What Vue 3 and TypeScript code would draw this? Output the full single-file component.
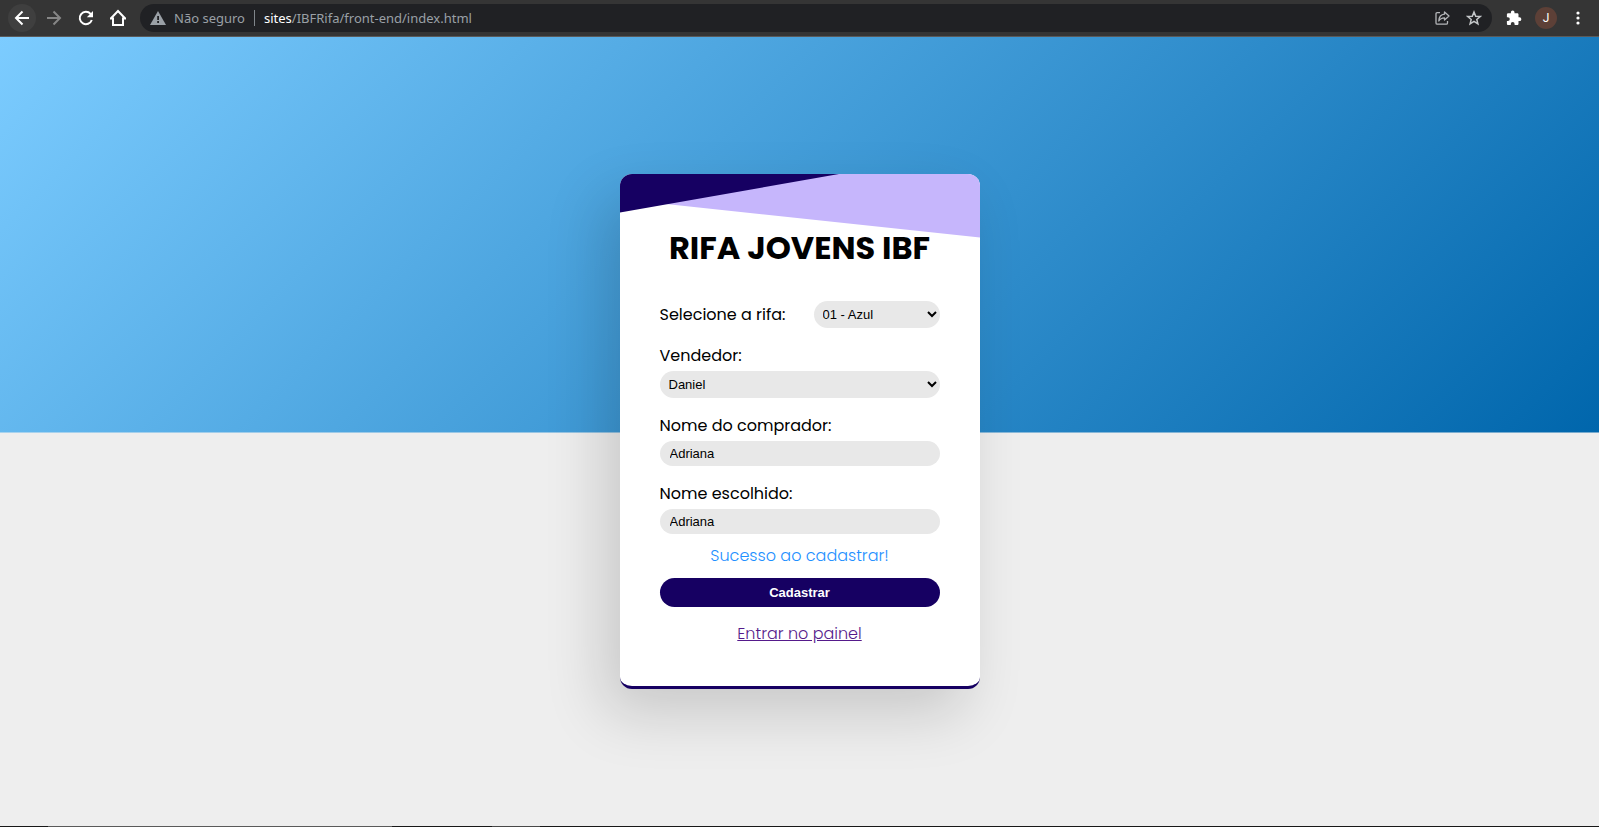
<script setup lang="ts">
import { ref } from 'vue'

const raffles: string[] = ['01 - Azul', '02 - Verde', '03 - Rosa']
const sellers: string[] = ['Daniel', 'Adriana', 'Lucas']

const raffle = ref<string>('01 - Azul')
const seller = ref<string>('Daniel')
const buyer = ref<string>('Adriana')
const chosen = ref<string>('Adriana')
const message = ref<string>('Sucesso ao cadastrar!')
</script>

<template>
  <div class="window">
    <header class="toolbar">
      <nav class="nav" aria-label="Navegação">
        <button type="button" class="icon-btn hovered" aria-label="Voltar">
          <svg width="16" height="16" viewBox="0 0 16 16" fill="none" stroke="#fff" stroke-width="2">
            <path d="M15 8H2.5M8.5 1.5L2 8l6.500 6.500" />
          </svg>
        </button>
        <button type="button" class="icon-btn" aria-label="Avançar">
          <svg width="16" height="16" viewBox="0 0 16 16" fill="none" stroke="#868686" stroke-width="2">
            <path d="M1 8h12.500M7.500 1.500L14 8l-6.500 6.500" />
          </svg>
        </button>
        <button type="button" class="icon-btn" aria-label="Recarregar">
          <svg width="16" height="16" viewBox="0 0 16 16" fill="none" stroke="#fff" stroke-width="2">
            <path d="M13.800 10A6.200 6.200 0 1 1 12.600 3.800L14 5.200" />
            <path d="M15 1v6.200H8.800z" fill="#fff" stroke="none" />
          </svg>
        </button>
        <button type="button" class="icon-btn" aria-label="Página inicial">
          <svg width="18" height="18" viewBox="0 0 18 18" fill="none" stroke="#fff" stroke-width="2">
            <path d="M1.800 9.500L9 2l7.200 7.500M4 8.500V16h10V8.500M1 9.500h3M14 9.500h3" />
          </svg>
        </button>
      </nav>

      <div class="address">
        <svg class="warn" width="16" height="14" viewBox="0 0 16 14">
          <path d="M8 0l8 14H0z" fill="#9aa0a6" />
          <path d="M7.200 5h1.800v4H7.200zM7.200 10h1.800v2H7.200z" fill="#202124" />
        </svg>
        <span class="security">Não seguro</span>
        <span class="divider"></span>
        <span class="url"><b>sites</b>/IBFRifa/front-end/index.html</span>
        <button type="button" class="mini-btn" aria-label="Compartilhar">
          <svg width="15" height="14" viewBox="0 0 15 14" fill="none" stroke="#b4b6b9" stroke-width="1.300">
            <path d="M5 1.700H2.200Q1 1.700 1 3v9q0 1.200 1.200 1.200h9q1.300 0 1.300-1.200v-2" />
            <path d="M9.500 1l4.500 4-4.500 4V6.800C6.800 6.800 5 7.800 3.800 10 4 6.500 6 3.500 9.500 3.200z" stroke-linejoin="round" />
          </svg>
        </button>
        <button type="button" class="mini-btn" aria-label="Favoritar">
          <svg width="16" height="16" viewBox="0 0 16 16" fill="none" stroke="#c4c7c9" stroke-width="1.500">
            <path d="M8 2l1.700 4.200 4.500.3-3.400 2.900 1.100 4.400L8 11.400l-3.900 2.400 1.100-4.400L1.800 6.500l4.500-.3z" />
          </svg>
        </button>
      </div>

      <div class="tools">
        <button type="button" class="mini-btn" aria-label="Extensões">
          <svg width="16" height="16" viewBox="0 0 16 16" fill="#fff">
            <path d="M13.500 7.300h-1V4.600c0-.8-.6-1.300-1.300-1.300H8.500V2.200a1.800 1.800 0 0 0-3.600 0v1.100H2.200C1.400 3.300.9 3.900.9 4.600v2.600h1a1.900 1.900 0 0 1 0 3.800h-1v2.700c0 .7.600 1.300 1.300 1.300h2.600v-1a1.900 1.900 0 0 1 3.800 0v1h2.600c.7 0 1.300-.6 1.300-1.300V11h1a1.800 1.800 0 0 0 0-3.700z" />
          </svg>
        </button>
        <button type="button" class="avatar" aria-label="Perfil">J</button>
        <button type="button" class="mini-btn" aria-label="Menu">
          <svg width="4" height="14" viewBox="0 0 4 14" fill="#fff">
            <circle cx="2" cy="2" r="1.600" />
            <circle cx="2" cy="7" r="1.600" />
            <circle cx="2" cy="12" r="1.600" />
          </svg>
        </button>
      </div>
    </header>

    <main class="page">
      <form class="card" @submit.prevent>
        <svg class="ribbon" viewBox="0 0 360 64" preserveAspectRatio="none" aria-hidden="true">
          <path d="M40 0H360V63.500L46 30z" fill="#c6b6fc" />
          <path d="M0 0H219L0 38.500z" fill="#160062" />
        </svg>

        <h1>RIFA JOVENS IBF</h1>

        <div class="field inline">
          <label for="raffle">Selecione a rifa:</label>
          <select id="raffle" v-model="raffle">
            <option v-for="r in raffles" :key="r">{{ r }}</option>
          </select>
        </div>
        <div class="field">
          <label for="seller">Vendedor:</label>
          <select id="seller" v-model="seller">
            <option v-for="s in sellers" :key="s">{{ s }}</option>
          </select>
        </div>
        <div class="field">
          <label for="buyer">Nome do comprador:</label>
          <input id="buyer" v-model="buyer" type="text" />
        </div>
        <div class="field">
          <label for="chosen">Nome escolhido:</label>
          <input id="chosen" v-model="chosen" type="text" />
        </div>

        <p class="message">{{ message }}</p>
        <button type="submit" class="submit">Cadastrar</button>
        <a class="panel-link" href="#painel">Entrar no painel</a>
      </form>
    </main>

    <footer class="taskbar"></footer>
  </div>
</template>

<style>
body {
  margin: 0;
}
</style>

<style scoped>
.window {
  display: flex;
  flex-direction: column;
  min-height: 100vh;
  font-family: Poppins, Inter, "Open Sans", sans-serif;
}

button {
  border: 0;
  padding: 0;
  background: none;
  cursor: pointer;
}

svg {
  display: block;
}

.toolbar {
  display: flex;
  align-items: center;
  height: 36px;
  padding: 0 13px 0 8px;
  background: #353535;
  border-bottom: 1px solid #5a5a5a;
}

.nav {
  display: flex;
  gap: 4px;
  margin-right: 8px;
}

.icon-btn {
  display: grid;
  place-items: center;
  width: 28px;
  height: 28px;
  border-radius: 50%;
}

.hovered {
  background: #3f3f3f;
}

.address {
  display: flex;
  flex: 1;
  align-items: center;
  height: 28px;
  padding: 0 10px;
  border-radius: 14px;
  background: #202124;
  color: #9aa0a6;
  font: 13px/20px "Noto Sans", "Open Sans", sans-serif;
}

.security {
  margin-left: 8px;
}

.divider {
  width: 1px;
  height: 16px;
  margin: 0 9px;
  background: #80868b;
}

.url {
  flex: 1;
}

.url b {
  color: #fff;
  font-weight: 400;
}

.address .mini-btn {
  margin-left: 16px;
}

.tools {
  display: flex;
  align-items: center;
  gap: 13px;
  margin-left: 14px;
}

.tools .mini-btn:last-child {
  padding: 0 6px;
}

.avatar {
  width: 22px;
  height: 22px;
  border-radius: 50%;
  background: #5d4037;
  color: #fff;
  font: 12px/22px Roboto, sans-serif;
}

.page {
  display: flex;
  flex: 1;
  align-items: center;
  justify-content: center;
  background: linear-gradient(135deg, #7cccff, #0066ac) top / 100% calc(50% + 1px) no-repeat #eee;
}

.card {
  position: relative;
  display: flex;
  flex-direction: column;
  box-sizing: border-box;
  width: 360px;
  padding: 50px 40px 40px;
  overflow: hidden;
  border-bottom: 3px solid #160062;
  border-radius: 12px;
  background: #fff;
  box-shadow: -16px 24px 60px rgba(0, 0, 0, 0.16);
}

.ribbon {
  position: absolute;
  top: 0;
  left: 0;
  width: 100%;
  height: 64px;
}

h1 {
  position: relative;
  margin: 0 0 29px;
  font-size: 32px;
  font-weight: 700;
  line-height: 48px;
  text-align: center;
  white-space: nowrap;
}

.field {
  display: flex;
  flex-direction: column;
  gap: 3px;
  margin-bottom: 16px;
  font-size: 16px;
  line-height: 24px;
}

.inline {
  flex-direction: row;
  align-items: center;
  justify-content: space-between;
}

.inline select {
  width: 126px;
}

select,
input {
  box-sizing: border-box;
  width: 100%;
  border: 0;
  border-radius: 14px;
  background-color: #e8e8e8;
  color: #000;
  font: 13px "Liberation Sans", Arial, sans-serif;
}

select {
  height: 27px;
  padding: 0 5px;
}

input {
  height: 25px;
  padding: 0 10px;
}

.message {
  margin: -6px 0 10px;
  color: #1e90ff;
  font-size: 16px;
  font-weight: 300;
  line-height: 24px;
  text-align: center;
}

.submit {
  height: 29px;
  margin-bottom: 15px;
  border-radius: 15px;
  background: #160062;
  color: #fff;
  font: 700 13px "Liberation Sans", Arial, sans-serif;
}

.panel-link {
  align-self: center;
  color: #551a8b;
  font-size: 16px;
  font-weight: 300;
  line-height: 24px;
}

.taskbar {
  height: 1px;
  background: linear-gradient(90deg, #181818 48px, #5a5a5a 48px 392px, #181818 392px 492px, #484848 492px 540px, #181818 540px);
}
</style>
